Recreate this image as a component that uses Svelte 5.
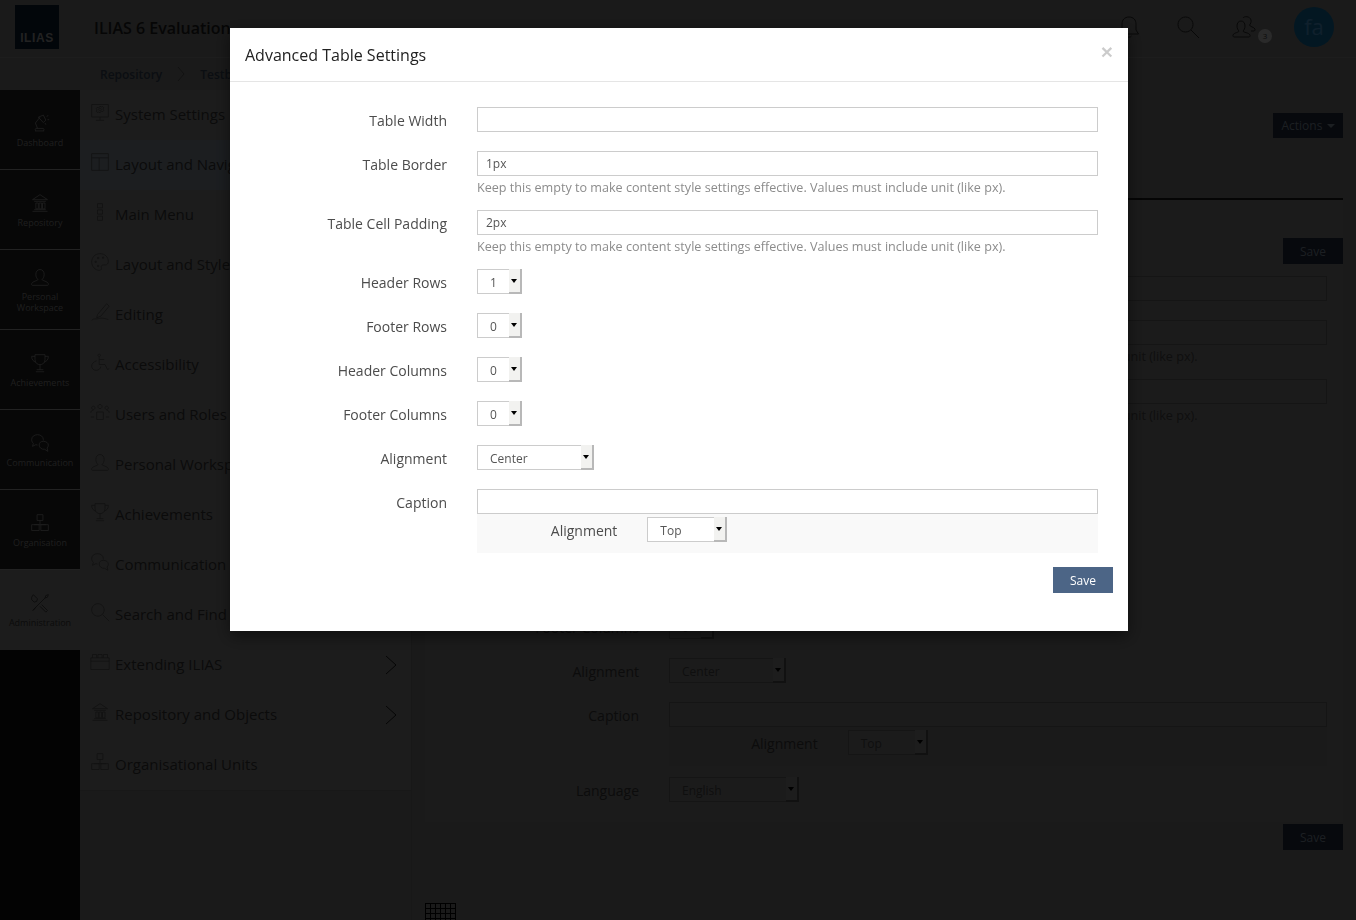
<script>
    // outline icons, 24 box, drawn with a thin stroke
    const icons = {
        lamp: "M6 21.5h11M7 21.5c-1-1-1-2.5 0-3h9c1 .5 1 2 0 3M9 18.5L6.5 12 12 5M10 5l6-2.5 3 6-3 3-6-6.5zM20 4l2-1M21 8h2M18 12l1 2",
        bank: "M12 2L3 8h18zM5 10h14M3 22h18M5 20h14M7 12h3v7H7zM11 12h3v7h-3zM15 12h3v7h-3z",
        person: "M12 3c3 0 5 2.5 5 6 0 3-1.500 5-2.500 6 0 1.500 6.500 2 7.500 5 .3 1 0 2-1 2H3c-1 0-1.300-1-1-2 1-3 7.500-3.500 7.500-5C8.500 14 7 12 7 9c0-3.500 2-6 5-6z",
        trophy: "M6 2h12v6c0 4-3 6-6 6s-6-2-6-6zM6 4H2c0 4 2 6 5 7M18 4h4c0 4-2 6-5 7M12 14v6M8 20h8M7 22.500h10",
        chat: "M9 2c4 0 7 2.500 7 6 .1 .6 0 1 0 1M9 2C5 2 2 4.500 2 8c0 2 1 3.500 2 4.500L3 16l4-2 2 .5M16 10c3.500 0 6 2 6 4.500 0 1.500-.7 2.500-1.500 3.500l1 4-4-2.500c-3.500.5-6.500-2-6.500-5s2-4.500 5-4.500z",
        org: "M8.500 2h7v7h-7zM12 9v5M5 14h14M2 14h9v7H2zM13 14h9v7h-9z",
        tools: "M3 21L18 6l1-3 3-1-1 3-3 1M2 5l2-3 5 5-1 3-3 1-3-3zM14 14l7 7-2 2-7-7M7 17l-3 4",
        monitor: "M2 3h20v15H2zM12 18v4M7 22h10M12 5l1.500 1 2-.5 1 1.500-1 1.500 1 1.500-1 1.500-2-.5L12 13l-1.500-1-2 .5-1-1.500 1-1.500-1-1.500 1-1.500 2 .5zM12 7.500a1.500 1.500 0 1 0 .01 0",
        layout: "M2 2h20v20H2zM2 7h20M11 7v15",
        menu: "M9 2h6v5H9zM9 9.500h6v5H9zM9 17h6v5H9z",
        palette: "M12 2C6 2 2 6.500 2 12s4.500 10 9 10c3 0 3-2 2.500-3.500-.5-2 1-3 3-3h2c2 0 3.500-1.500 3.500-4C22 6 18 2 12 2zM6 11h1.500v1.500H6zM9 16h1.500v1.500H9zM9 6.500h1.500V8H9zM15 6h1.500v1.500H15z",
        pen: "M9 15L20 2l3 3-10 12-5 2zM2 22c3-3 5-1 8-2s5-1 12 1",
        wheel: "M11 2.500a1.500 1.500 0 1 0 .01 0M11 6v9h7l3 6 2-1M11 9h6M8 10.500c-3.500 1-6 3.500-6 6.500 0 3 2.500 5 5.500 5 3 0 5-2 5.500-4.500",
        people: "M12 3a2.500 2.500 0 1 0 .01 0M8 12h8v9H8zM4 5a2 2 0 1 0 .01 0M20 5a2 2 0 1 0 .01 0M1 13c0-2 1-3 3-3M23 13c0-2-1-3-3-3M1 18h4M19 18h4",
        search: "M9.500 2a7.500 7.500 0 1 0 .01 0M15 15l8 8",
        brick: "M1 7h22v14H1zM3 7V3h5v4M9.500 7V3h5v4M16 7V3h5v4M1 11h22",
        bell: "M12 2c-4.500 0-7 3-7 7v6l-2.500 4h19L19 15V9c0-4-2.500-7-7-7zM9.500 21c.5 1.500 4.500 1.500 5 0",
        users: "M9 6c2.500 0 4 2 4 5 0 2.500-1 4-2 5 0 1.500 6 1.500 7 4 .3 1-.3 2-1 2H2c-.7 0-1.300-1-1-2 1-2.500 6-2.500 6-4-1-1-2-2.500-2-5 0-3 1.500-5 4-5zM11 3c1-2 7-2 8 2 .5 2-.5 4-1.500 5 0 1.500 4.500 2 5.500 4 .3 1-.5 2-1 2h-3"
    };

    const mainbar = [
        { icon: "lamp", label: "Dashboard" },
        { icon: "bank", label: "Repository" },
        { icon: "person", label: "Personal Workspace" },
        { icon: "trophy", label: "Achievements" },
        { icon: "chat", label: "Communication" },
        { icon: "org", label: "Organisation" },
        { icon: "tools", label: "Administration", active: true }
    ];

    const slate = [
        { icon: "monitor", label: "System Settings" },
        { icon: "layout", label: "Layout and Navigation", active: true },
        { icon: "menu", label: "Main Menu" },
        { icon: "palette", label: "Layout and Styles" },
        { icon: "pen", label: "Editing" },
        { icon: "wheel", label: "Accessibility" },
        { icon: "people", label: "Users and Roles" },
        { icon: "person", label: "Personal Workspace" },
        { icon: "trophy", label: "Achievements" },
        { icon: "chat", label: "Communication" },
        { icon: "search", label: "Search and Find" },
        { icon: "brick", label: "Extending ILIAS", more: true },
        { icon: "bank", label: "Repository and Objects", more: true },
        { icon: "org", label: "Organisational Units" }
    ];

    const help = "Keep this empty to make content style settings effective. Values must include unit (like px).";

    const fields = [
        { label: "Table Width", value: "" },
        { label: "Table Border", value: "1px", help },
        { label: "Table Cell Padding", value: "2px", help },
        { label: "Header Rows", select: "1", size: 45 },
        { label: "Footer Rows", select: "0", size: 45 },
        { label: "Header Columns", select: "0", size: 45 },
        { label: "Footer Columns", select: "0", size: 45 },
        { label: "Alignment", select: "Center", size: 117 },
        { label: "Caption", value: "", sub: true }
    ];

    // the page behind the dialog has one row more, hidden by the dialog
    const pageFields = [
        ...fields.slice(0, 3),
        { label: "Style", select: "Standard", size: 117 },
        ...fields.slice(3),
        { label: "Language", select: "English", size: 130 }
    ];
</script>

{#snippet icon(name)}
    <svg class="icon" viewBox="0 0 24 24" aria-hidden="true"><path d={icons[name]} /></svg>
{/snippet}

{#snippet select(value, size)}
    <div class="select" style="width: {size}px">
        <span class="select-value">{value}</span>
        <span class="select-arrow"></span>
    </div>
{/snippet}

{#snippet form(rows)}
    {#each rows as row}
        <div class="row" class:has-sub={row.sub}>
            <label class="row-label" for={row.label}>{row.label}</label>
            <div class="row-control">
                {#if row.select}
                    {@render select(row.select, row.size)}
                {:else}
                    <input id={row.label} class="text" type="text" value={row.value} />
                {/if}
                {#if row.help}
                    <div class="help">{row.help}</div>
                {/if}
                {#if row.sub}
                    <div class="sub">
                        <span class="sub-label">Alignment</span>
                        {@render select("Top", 80)}
                    </div>
                {/if}
            </div>
        </div>
    {/each}
{/snippet}

<div class="page">
    <header class="topbar">
        <div class="logo"><span>ILIAS</span></div>
        <div class="title">ILIAS 6 Evaluation</div>
        <div class="meta">
            <span class="meta-item bell">{@render icon("bell")}</span>
            <span class="meta-item">{@render icon("search")}</span>
            <span class="meta-item users">{@render icon("users")}<b class="badge">3</b></span>
            <span class="avatar">fa</span>
        </div>
    </header>
    <nav class="crumbs">
        <span>Repository</span>
        <svg class="crumb-sep" viewBox="0 0 8 16"><path d="M1 1l6 7-6 7" /></svg>
        <span>Testbed</span>
    </nav>
    <div class="main">
        <div class="mainbar">
            {#each mainbar as item}
                <div class="mainbar-item" class:active={item.active}>
                    {@render icon(item.icon)}
                    <span>{item.label}</span>
                </div>
            {/each}
        </div>
        <div class="slate">
            <div class="slate-list">
                {#each slate as item}
                    <div class="slate-item" class:active={item.active}>
                        {@render icon(item.icon)}
                        <span>{item.label}</span>
                        {#if item.more}
                            <svg class="chevron" viewBox="0 0 12 20"><path d="M1 1l10 9-10 9" /></svg>
                        {/if}
                    </div>
                {/each}
            </div>
        </div>
        <div class="content">
            <div class="actions"><button class="btn">Actions <i class="caret"></i></button></div>
            <div class="tabs"></div>
            <div class="page-form">
                <div class="btn-row"><button class="btn">Save</button></div>
                {@render form(pageFields)}
                <div class="btn-row"><button class="btn">Save</button></div>
            </div>
            <table class="grid">
                <tbody>
                    {#each [1, 2, 3, 4, 5] as r}
                        <tr>{#each [1, 2, 3, 4, 5, 6] as c}<td></td>{/each}</tr>
                    {/each}
                </tbody>
            </table>
        </div>
    </div>
</div>

<div class="backdrop">
    <div class="modal">
        <div class="modal-header">
            <h4>Advanced Table Settings</h4>
            <button class="close" aria-label="Close">×</button>
        </div>
        <div class="modal-body">
            {@render form(fields)}
            <div class="btn-row"><button class="btn">Save</button></div>
        </div>
    </div>
</div>

<style>
    :global(body) {
        background: #828282;
        font-family: "Open Sans", sans-serif;
        overflow: hidden;
    }
    .page {
        height: 920px;
        overflow: hidden;
        background: #828282;
    }
    .icon {
        display: block;
        flex: none;
        width: 20px;
        height: 20px;
        fill: none;
        stroke: currentColor;
        stroke-width: 1;
    }

    .topbar {
        display: flex;
        align-items: center;
        height: 57px;
        border-bottom: 1px solid #929292;
    }
    .logo {
        display: flex;
        align-items: flex-end;
        justify-content: center;
        width: 44px;
        height: 44px;
        margin: -3px 0 0 15px;
        background: #0a1e32;
        color: #aaa;
        font: bold 12px "Liberation Sans", sans-serif;
        letter-spacing: 0.6px;
        padding-bottom: 4px;
        box-sizing: border-box;
    }
    .title {
        margin: -2px 0 0 35px;
        font-size: 16px;
        font-weight: 600;
        color: #1e1e1e;
    }
    .meta {
        display: flex;
        align-items: center;
        margin-left: auto;
        margin-right: 22px;
        margin-top: -4px;
        color: #282828;
    }
    .meta-item {
        position: relative;
        margin-right: 32px;
    }
    .meta-item .icon {
        width: 24px;
        height: 24px;
    }
    .bell {
        margin-right: 35px;
    }
    .users {
        margin-right: 38px;
    }
    .badge {
        position: absolute;
        right: -16px;
        bottom: -4px;
        width: 14px;
        height: 14px;
        border-radius: 50%;
        background: #d2d2d2;
        color: #3c3c3c;
        font-size: 8px;
        font-weight: 400;
        line-height: 14px;
        text-align: center;
    }
    .avatar {
        width: 40px;
        height: 40px;
        border-radius: 50%;
        background: #0f73aa;
        color: #50a0dc;
        font-size: 22px;
        line-height: 38px;
        text-align: center;
    }
    .crumbs {
        display: flex;
        align-items: center;
        gap: 15px;
        height: 32px;
        padding-left: 100px;
        font-size: 12px;
        font-weight: 600;
        color: #374659;
    }
    .crumb-sep {
        width: 8px;
        height: 16px;
        fill: none;
        stroke: #5a5a5a;
    }
    .main {
        display: flex;
        height: 830px;
    }
    .mainbar {
        flex: 0 0 80px;
        background: #0f0f0f;
    }
    .mainbar-item {
        display: flex;
        flex-direction: column;
        align-items: center;
        justify-content: center;
        gap: 4px;
        height: 80px;
        padding: 1px 2px 0;
        box-sizing: border-box;
        border-bottom: 1px solid #aaa;
        background: #232323;
        color: #969696;
        font-size: 9px;
        line-height: 11px;
        text-align: center;
    }
    .mainbar-item.active {
        border-bottom: 0;
        background: #8c8c8c;
        color: #383838;
    }
    .slate {
        flex: 0 0 332px;
        border-right: 1px solid #777;
        box-sizing: border-box;
    }
    .slate-list {
        height: 700px;
        background: #8c8c8c;
        border-bottom: 1px solid #7a7a7a;
    }
    .slate-item {
        position: relative;
        display: flex;
        align-items: center;
        gap: 5px;
        height: 50px;
        padding: 0 0 2px 10px;
        box-sizing: border-box;
        font-size: 15px;
        color: #383838;
    }
    .slate-item .icon {
        margin-top: -4px;
        color: #555;
    }
    .slate-item.active {
        background: #8a96a2;
    }
    .chevron {
        position: absolute;
        left: 305px;
        top: 15px;
        width: 12px;
        height: 20px;
        fill: none;
        stroke: #1e1e1e;
    }
    .content {
        flex: 1;
        margin-left: 13px;
        margin-right: 13px;
        position: relative;
    }
    .actions {
        display: flex;
        justify-content: flex-end;
        padding-top: 23px;
    }
    .actions .btn {
        width: 70px;
        height: 25px;
    }
    .caret {
        display: inline-block;
        margin-left: 1px;
        vertical-align: 2px;
        border-top: 4px solid #8a9aaa;
        border-left: 4px solid transparent;
        border-right: 4px solid transparent;
    }
    .tabs {
        height: 60px;
        border-bottom: 2px solid #191919;
    }
    .page-form {
        height: 622px;
        padding: 38px 16px 0 12px;
        box-sizing: border-box;
        background: #878787;
    }
    .page-form .btn-row {
        margin: 0 -16px 12px 0;
    }
    .page-form .has-sub {
        margin-bottom: 11px;
    }
    .page-form .btn-row:last-child {
        margin: 22px -16px 0 0;
    }
    .page-form .row:nth-last-child(2) {
        margin-bottom: 0;
    }
    .page-form .row-label,
    .page-form .sub-label {
        color: #3c3c3c;
    }
    .page-form .text,
    .page-form .select {
        border-color: #6a6a6a;
        background: #878787;
        color: #4b4b4b;
    }
    .page-form .help {
        color: #4b4b4b;
    }
    .page-form .sub {
        background: #828282;
    }
    .page-form .select-arrow {
        background: #8f8f8f;
        border-color: #555;
    }
    .content .btn {
        background: #232d41;
        color: #8a9aaa;
    }
    .grid {
        position: absolute;
        left: 0;
        top: 813px;
        border-collapse: collapse;
    }
    .grid td {
        width: 4px;
        height: 4px;
        padding: 0;
        border: 1px solid #000;
    }

    /* form parts, used by the page and by the dialog */
    .row {
        display: flex;
        gap: 30px;
        margin-bottom: 19px;
    }
    .row-label {
        flex: 0 0 202px;
        height: 25px;
        font-size: 14px;
        line-height: 27px;
        color: #4c4c4c;
        text-align: right;
        text-rendering: optimizeLegibility;
    }
    .row-control {
        flex: 1;
        min-width: 0;
    }
    .text {
        display: block;
        width: 100%;
        height: 25px;
        padding: 0 8px;
        box-sizing: border-box;
        border: 1px solid #ccc;
        border-radius: 0;
        background: #fff;
        font: 12px "Open Sans", sans-serif;
        color: #555;
        outline: none;
    }
    .help {
        height: 15px;
        margin-top: 4px;
        margin-bottom: -4px;
        font-size: 12.6px;
        line-height: 15px;
        color: #8c8c8c;
        white-space: nowrap;
    }
    .select {
        display: flex;
        height: 25px;
        box-sizing: border-box;
        border: 1px solid #ccc;
        background: #fff;
        font-size: 12px;
        line-height: 25px;
        color: #555;
    }
    .select-value {
        flex: 1;
        height: 23px;
        padding-left: 12px;
    }
    .select-arrow {
        position: relative;
        width: 13px;
        margin: -1px -1px -1px 0;
        box-sizing: border-box;
        background: #f2f2f0;
        border-right: 2px solid #b8b8b8;
        border-bottom: 2px solid #b8b8b8;
    }
    .select-arrow::after {
        content: "";
        position: absolute;
        left: 2px;
        top: 10px;
        border-top: 4px solid #000;
        border-left: 3px solid transparent;
        border-right: 3px solid transparent;
    }
    .sub {
        display: flex;
        gap: 30px;
        height: 39px;
        padding-top: 3px;
        box-sizing: border-box;
        background: #f9f9f9;
    }
    .sub-label {
        flex: 0 0 22.6%;
        font-size: 14px;
        line-height: 27px;
        color: #4c4c4c;
        text-align: right;
    }
    .btn-row {
        display: flex;
        justify-content: flex-end;
    }
    .btn {
        width: 60px;
        height: 26px;
        padding: 0;
        border: 0;
        border-radius: 0;
        background: #4c6586;
        color: #fff;
        font: 12px "Open Sans", sans-serif;
    }

    /* dialog */
    .backdrop {
        position: fixed;
        inset: 0;
        background: rgba(0, 0, 0, 0.8);
    }
    .modal {
        width: 898px;
        height: 603px;
        margin: 28px 0 0 230px;
        background: #fff;
        box-shadow: 0 5px 15px rgba(0, 0, 0, 0.5);
    }
    .modal-header {
        display: flex;
        justify-content: space-between;
        height: 54px;
        padding: 15px;
        box-sizing: border-box;
        border-bottom: 1px solid #e5e5e5;
    }
    h4 {
        margin: 0;
        font-size: 16px;
        font-weight: 400;
        line-height: 24px;
        color: #222;
    }
    .close {
        margin: -4px 0 0;
        padding: 0;
        height: 24px;
        border: 0;
        background: none;
        font: bold 21px/1 "Liberation Sans", sans-serif;
        color: #000;
        opacity: 0.2;
    }
    .modal-body {
        padding: 25px 15px 0 15px;
    }
    .modal-body .row {
        padding-right: 15px;
    }
    .modal-body .has-sub {
        margin-bottom: 14px;
    }
</style>
